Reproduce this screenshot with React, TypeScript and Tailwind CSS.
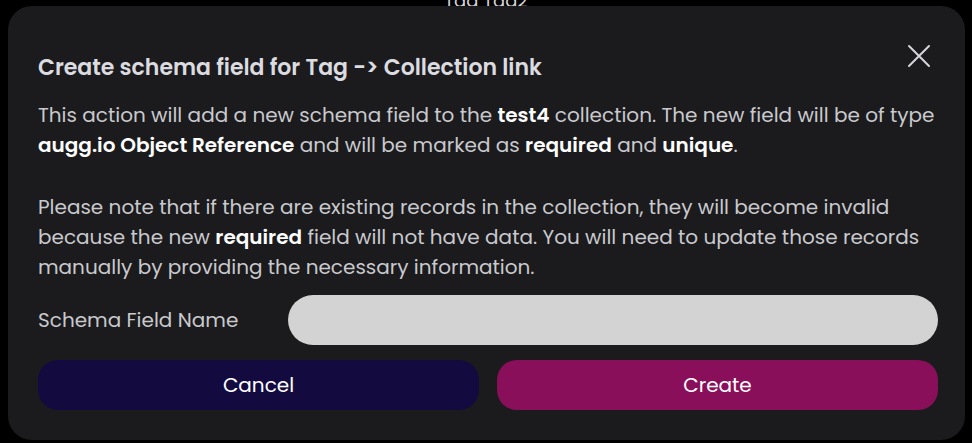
import React from "react";

const font = { fontFamily: '"Poppins", Inter, "Noto Sans", sans-serif' };

const App = () => {
  return (
    <div className="relative w-[972px] h-[443px] bg-black overflow-hidden" style={font}>
      <div className="flex justify-center -mt-[13px] text-[18px] text-[#d4d4d8]">Tag Tag2</div>
      <div className="absolute left-[8px] top-[6px] w-[957px] h-[434px] bg-[#1b1b1d] rounded-[24px] pl-[30px] pr-[27px] pt-[38px]">
        <button className="absolute right-[34px] top-[38px] size-[24px] flex items-center justify-center text-[#d6d6da]">
          <svg width="24" height="24" viewBox="0 0 24 24" fill="none" stroke="currentColor" strokeWidth="2" strokeLinecap="round">
            <path d="M2 2L22 22M22 2L2 22" />
          </svg>
        </button>
        <h2 className="text-[22px] leading-[28px] font-semibold text-[#dcdce0] mt-[10px]">
          Create schema field for Tag -&gt; Collection link
        </h2>
        <div className="mt-[18px] text-[20px] leading-[30px] text-[#c9c9ce]">
          <p>
            This action will add a new schema field to the <b className="font-semibold text-white">test4</b> collection. The
            new field will be of type <b className="font-semibold text-white">augg.io Object Reference</b> and will be marked
            as <b className="font-semibold text-white">required</b> and <b className="font-semibold text-white">unique</b>.
          </p>
          <p className="mt-[32px]">
            Please note that if there are existing records in the collection, they will become invalid because the new{" "}
            <b className="font-semibold text-white">required</b> field will not have data. You will need to update those
            records manually by providing the necessary information.
          </p>
        </div>
        <div className="flex items-center mt-[13px]">
          <label className="w-[250px] text-[20px] text-[#c9c9ce]">Schema Field Name</label>
          <input className="flex-1 h-[50px] rounded-full bg-[#d3d3d3] px-5 outline-none text-black" />
        </div>
        <div className="grid grid-cols-2 gap-[18px] mt-[15px]">
          <button className="h-[50px] rounded-[20px] bg-[#130b40] text-white text-[20px]">Cancel</button>
          <button className="h-[50px] rounded-[20px] bg-[#8a0f5a] text-white text-[20px]">Create</button>
        </div>
      </div>
    </div>
  );
};

export default App;
